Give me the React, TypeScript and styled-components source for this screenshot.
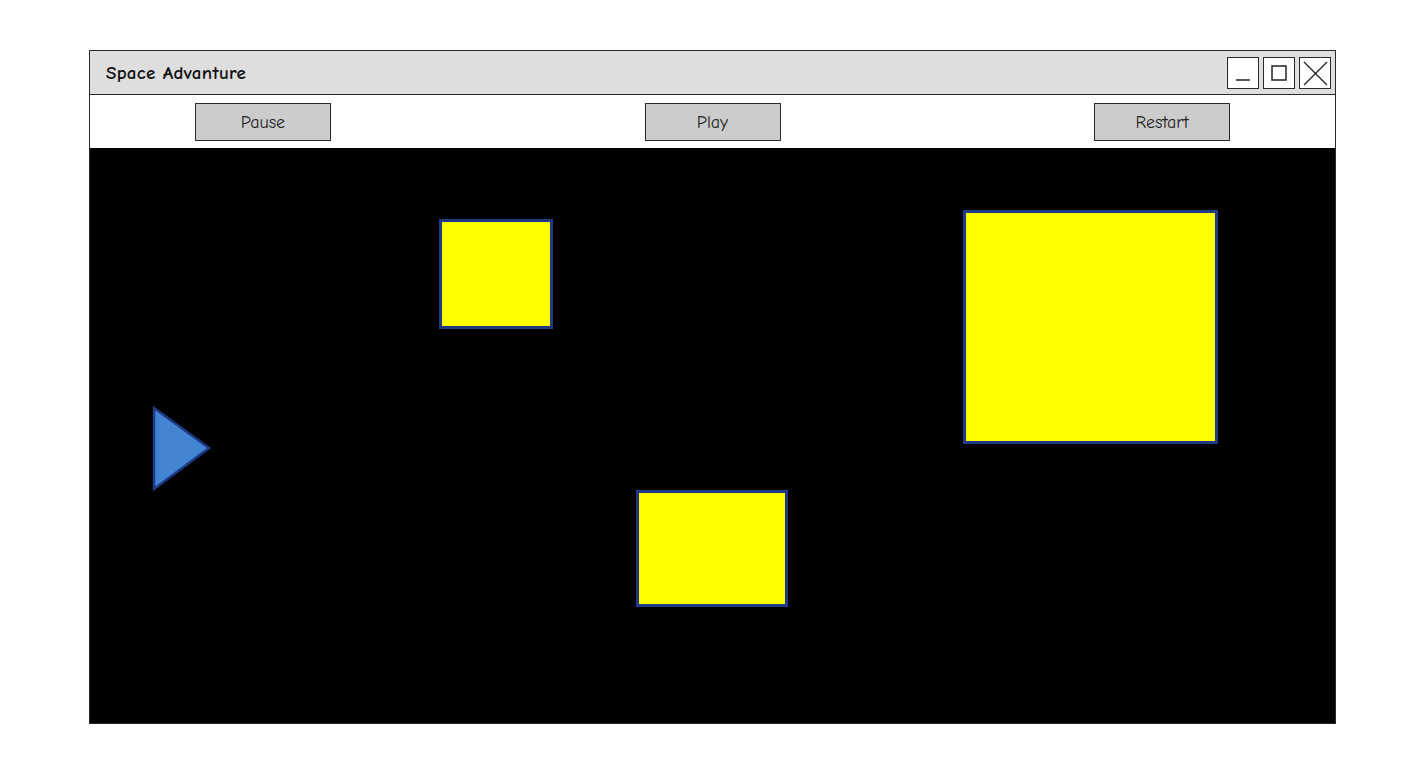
import React from 'react';
import styled, { createGlobalStyle } from 'styled-components';

const GlobalStyle = createGlobalStyle`
  html, body {
    margin: 0;
    padding: 0;
    background: #ffffff;
  }
  body {
    font-family: "Comic Sans MS", "Comic Neue", "Noto Sans", sans-serif;
  }
`;

const Page = styled.div`
  width: 1427px;
  height: 777px;
  padding: 50px 0 0 89px;
  box-sizing: border-box;
`;

const Window = styled.div`
  width: 1247px;
  height: 674px;
  box-sizing: border-box;
  border: 1.5px solid #2a2a2a;
  display: flex;
  flex-direction: column;
  background: #ffffff;
`;

const TitleBar = styled.div`
  height: 43px;
  flex: none;
  background: #dedede;
  border-bottom: 1.5px solid #2a2a2a;
  display: flex;
  align-items: center;
  justify-content: space-between;
  padding: 0 4px 0 16px;
`;

const Title = styled.span`
  font-size: 19px;
  font-weight: bold;
  color: #111;
  letter-spacing: 0.3px;
  margin-top: 1px;
`;

const Controls = styled.div`
  display: flex;
  gap: 4px;
  margin-top: 1px;
`;

const ControlBox = styled.div`
  width: 32px;
  height: 32px;
  box-sizing: border-box;
  border: 1.5px solid #2a2a2a;
  background: #ffffff;
  display: flex;
  align-items: center;
  justify-content: center;
`;

const Toolbar = styled.div`
  height: 53px;
  flex: none;
  display: flex;
  align-items: center;
  justify-content: space-between;
  padding: 0 105px 0 105px;
`;

const Button = styled.button`
  width: 136px;
  height: 38px;
  box-sizing: border-box;
  background: #cccccc;
  border: 1.5px solid #2a2a2a;
  font-family: "Comic Sans MS", "Comic Neue", "Noto Sans", sans-serif;
  font-size: 18px;
  color: #222;
  padding: 0;
  margin-top: 1px;
`;

const Canvas = styled.div`
  flex: 1;
  background: #000000;
  position: relative;
  overflow: hidden;
`;

const Block = styled.div<{ $x: number; $y: number; $w: number; $h: number }>`
  position: absolute;
  left: ${p => p.$x}px;
  top: ${p => p.$y}px;
  width: ${p => p.$w}px;
  height: ${p => p.$h}px;
  box-sizing: border-box;
  background: #ffff00;
  border: 3px solid #1f3a86;
`;

const Ship = styled.svg`
  position: absolute;
  left: 62px;
  top: 258px;
`;

const blocks = [
  { x: 349, y: 71, w: 114, h: 110 },
  { x: 873, y: 62, w: 255, h: 234 },
  { x: 546, y: 342, w: 152, h: 117 },
];

const App: React.FC = () => (
  <Page>
    <GlobalStyle />
    <Window>
      <TitleBar>
        <Title>Space Advanture</Title>
        <Controls>
          <ControlBox>
            <svg width="20" height="20" viewBox="0 0 20 20">
              <line x1="3" y1="17" x2="17" y2="17" stroke="#222" strokeWidth="1.5" />
            </svg>
          </ControlBox>
          <ControlBox>
            <svg width="20" height="20" viewBox="0 0 20 20">
              <rect x="3" y="3" width="14" height="14" fill="none" stroke="#222" strokeWidth="1.5" />
            </svg>
          </ControlBox>
          <ControlBox>
            <svg width="27" height="27" viewBox="0 0 27 27">
              <line x1="2" y1="2" x2="25" y2="25" stroke="#222" strokeWidth="1.3" />
              <line x1="25" y1="2" x2="2" y2="25" stroke="#222" strokeWidth="1.3" />
            </svg>
          </ControlBox>
        </Controls>
      </TitleBar>
      <Toolbar>
        <Button>Pause</Button>
        <Button>Play</Button>
        <Button>Restart</Button>
      </Toolbar>
      <Canvas>
        {blocks.map((b, i) => (
          <Block key={i} $x={b.x} $y={b.y} $w={b.w} $h={b.h} />
        ))}
        <Ship width="60" height="86" viewBox="0 0 60 86">
          <polygon points="2,2 57,42 2,83" fill="#4385d0" stroke="#1f3a86" strokeWidth="2.5" strokeLinejoin="miter" />
        </Ship>
      </Canvas>
    </Window>
  </Page>
);

export default App;
